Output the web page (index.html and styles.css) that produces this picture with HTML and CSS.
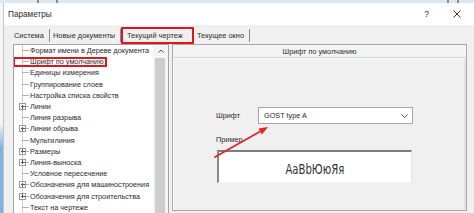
FILE: index.html
```html
<!DOCTYPE html>
<html lang="ru">
<head>
<meta charset="utf-8">
<title>Параметры</title>
<link rel="stylesheet" href="styles.css">
</head>
<body>
<div class="screen">
  <div class="backstrip">
    <span class="mark m1"></span><span class="mark m2"></span><span class="mark m3"></span><span class="mark m4"></span>
  </div>
  <div class="main">
    <div class="edge"></div>
    <div class="dialog">
      <div class="titlebar">
        <span class="title">Параметры</span>
        <span class="help">?</span>
        <svg class="close" width="8" height="8" viewBox="0 0 8 8"><path d="M0.5 0.5L7.5 7.5M7.5 0.5L0.5 7.5" stroke="#333" stroke-width="1" fill="none"/></svg>
      </div>
      <div class="tabs">
        <div class="tab t1">Система</div>
        <div class="tab t2">Новые документы</div>
        <div class="tab t3">Текущий чертеж</div>
        <div class="tab t4">Текущее окно</div>
      </div>
      <div class="content">
        <div class="tree">
          <ul class="list">
            <li class="row"><span class="conn"><i class="dash"></i></span><span class="label">Формат имени в Дереве документа</span></li>
            <li class="row sel"><span class="conn"><i class="dash"></i></span><span class="label">Шрифт по умолчанию</span></li>
            <li class="row"><span class="conn"><i class="dash"></i></span><span class="label">Единицы измерения</span></li>
            <li class="row"><span class="conn"><i class="dash"></i></span><span class="label">Группирование слоев</span></li>
            <li class="row"><span class="conn"><i class="dash"></i></span><span class="label">Настройка списка свойств</span></li>
            <li class="row"><span class="conn"><i class="exp"></i><i class="dash short"></i></span><span class="label">Линии</span></li>
            <li class="row"><span class="conn"><i class="dash"></i></span><span class="label">Линия разрыва</span></li>
            <li class="row"><span class="conn"><i class="exp"></i><i class="dash short"></i></span><span class="label">Линии обрыва</span></li>
            <li class="row"><span class="conn"><i class="dash"></i></span><span class="label">Мультилиния</span></li>
            <li class="row"><span class="conn"><i class="exp"></i><i class="dash short"></i></span><span class="label">Размеры</span></li>
            <li class="row"><span class="conn"><i class="exp"></i><i class="dash short"></i></span><span class="label">Линия-выноска</span></li>
            <li class="row"><span class="conn"><i class="dash"></i></span><span class="label">Условное пересечение</span></li>
            <li class="row"><span class="conn"><i class="exp"></i><i class="dash short"></i></span><span class="label">Обозначения для машиностроения</span></li>
            <li class="row"><span class="conn"><i class="exp"></i><i class="dash short"></i></span><span class="label">Обозначения для строительства</span></li>
            <li class="row"><span class="conn"><i class="dash"></i></span><span class="label">Текст на чертеже</span></li>
          </ul>
          <div class="vscroll">
            <div class="sbtn"><svg width="6" height="4" viewBox="0 0 6 4"><path d="M0.5 3.5L3 1L5.5 3.5" stroke="#555" stroke-width="1" fill="none"/></svg></div>
            <div class="thumb"></div>
          </div>
        </div>
        <div class="panel">
          <div class="phead">Шрифт по умолчанию</div>
          <div class="pbody">
            <div class="field">
              <span class="flabel">Шрифт</span>
              <div class="combo"><span>GOST type A</span><svg width="7" height="4" viewBox="0 0 7 4"><path d="M0.5 0.5L3.5 3.5L6.5 0.5" stroke="#555" stroke-width="1" fill="none"/></svg></div>
            </div>
            <div class="flabel sample-label">Пример</div>
            <div class="sample"><span>АаBbЮюЯя</span></div>
          </div>
        </div>
      </div>
    </div>
  </div>
  <svg class="pointer" width="474" height="213" viewBox="0 0 474 213">
    <path d="M215 157L261 131" stroke="#e3242b" stroke-width="1.8" stroke-linecap="round" fill="none"/>
    <path d="M268 127L261.9 134.5L258.5 128.4Z" fill="#e3242b"/>
  </svg>
</div>
</body>
</html>
```
FILE: styles.css
```css
html, body {
  margin: 0;
  padding: 0;
  background: #f0f0f0;
}

.screen {
  width: 474px;
  height: 213px;
  overflow: hidden;
  position: relative;
  display: flex;
  flex-direction: column;
  background: #f0f0f0;
  font-family: "Liberation Sans", Arial, sans-serif;
  color: #2b2b2b;
}

.backstrip {
  height: 3px;
  flex-shrink: 0;
  display: flex;
  background: #dbe7f3;
}

.mark {
  width: 2px;
  height: 3px;
  background: #8d8d8d;
}
.m1 { margin-left: 37px; }
.m2 { margin-left: 17px; }
.m3 { margin-left: 389px; }
.m4 { margin-left: 8px; }

.main {
  flex: 1;
  display: flex;
  min-height: 0;
}

.edge {
  width: 3px;
  flex-shrink: 0;
  background: linear-gradient(#f4f6f8 0, #f4f6f8 120px, #7fb2e5 145px, #7fb2e5 100%);
}

.dialog {
  flex: 1;
  display: flex;
  flex-direction: column;
  border-left: 1px solid #c4c4c4;
  background: #f0f0f0;
  min-width: 0;
}

.titlebar {
  height: 22px;
  flex-shrink: 0;
  background: #fff;
  display: flex;
  align-items: center;
  padding-left: 4px;
  font-size: 8.2px;
}

.help {
  margin-left: auto;
  margin-right: 24px;
  font-size: 8.5px;
}

.close {
  margin-right: 13px;
}

.tabs {
  height: 19px;
  flex-shrink: 0;
  display: flex;
  align-items: flex-start;
  padding-left: 9px;
  font-size: 7.4px;
  white-space: nowrap;
}

.tab {
  box-sizing: border-box;
  height: 13px;
  margin-top: 4px;
  display: flex;
  align-items: center;
  border-right: 1px solid #8a8a8a;
  padding-left: 1px;
}

.t1 { width: 37px; }
.t2 { width: 71px; padding-left: 3px; }
.t3 {
  width: 73px;
  height: 17px;
  margin-top: 2px;
  border: 2px solid #e0161e;
  padding-left: 4px;
}
.t4 { width: 56px; padding-left: 3px; }

.content {
  flex: 1;
  display: flex;
  align-items: flex-start;
  padding-left: 9px;
  gap: 3px;
  min-height: 0;
}

.tree {
  box-sizing: border-box;
  width: 156px;
  height: 200px;
  flex-shrink: 0;
  border: 1px solid #a3a3a3;
  border-bottom: none;
  background: #fff;
  display: flex;
}

.list {
  flex: 1;
  margin: 0;
  padding: 0;
  list-style: none;
  background: linear-gradient(to right, transparent 8px, #cfcfcf 8px, #cfcfcf 9px, transparent 9px) no-repeat;
  min-width: 0;
  overflow: hidden;
}

.row {
  height: 11.2px;
  display: flex;
  align-items: center;
  padding-left: 5px;
  font-size: 7.25px;
  white-space: nowrap;
}

.row.sel {
  position: relative;
  width: max-content;
  padding-right: 3px;
}

.row.sel::after {
  content: "";
  position: absolute;
  left: -1px;
  right: 0;
  top: 1px;
  bottom: 0;
  border: 2px solid #e0161e;
}

.conn {
  width: 10px;
  height: 100%;
  flex-shrink: 0;
  display: flex;
  align-items: center;
}

.dash {
  flex: 1;
  height: 1px;
  margin-left: 3px;
  background: #b0b0b0;
}

.dash.short {
  margin-left: 0;
}

.exp {
  box-sizing: border-box;
  width: 7px;
  height: 7px;
  flex-shrink: 0;
  border: 1px solid #9a9a9a;
  background:
    linear-gradient(#555, #555) 0.5px 2px / 4px 1px no-repeat,
    linear-gradient(#555, #555) 2px 0.5px / 1px 4px no-repeat,
    #fff;
}

.label {
  margin-left: 1px;
}

.vscroll {
  width: 15px;
  flex-shrink: 0;
  display: flex;
  flex-direction: column;
  background: #f4f4f4;
}

.sbtn {
  height: 12px;
  display: flex;
  align-items: center;
  justify-content: flex-start;
  padding-left: 5px;
}

.thumb {
  flex: 1;
  width: 10px;
  margin-left: 2px;
  margin-top: 1px;
  background: #cdcdcd;
}

.panel {
  box-sizing: border-box;
  width: 295px;
  height: 167px;
  flex-shrink: 0;
  border: 1px solid #a9a9a9;
  box-shadow: inset 1px 0 #fff, inset -2px 0 #e2e2e2;
  display: flex;
  flex-direction: column;
  background: #f0f0f0;
}

.phead {
  height: 12px;
  flex-shrink: 0;
  display: flex;
  align-items: center;
  justify-content: center;
  font-size: 7.3px;
  background: #f4f4f4;
  border-bottom: 1px solid #d4d4d4;
  box-shadow: 0 1px #fafafa;
}

.pbody {
  padding: 49px 0 0 43px;
  font-size: 7.3px;
}

.field {
  display: flex;
  align-items: center;
  height: 17px;
}

.flabel {
  width: 42px;
  flex-shrink: 0;
}

.combo {
  box-sizing: border-box;
  width: 155px;
  height: 17px;
  border: 1px solid #a6a6a6;
  background: #fff;
  display: flex;
  align-items: center;
  justify-content: space-between;
  padding: 0 4px 0 5px;
}

.sample-label {
  margin-top: 11px;
  height: 10px;
  line-height: 10px;
}

.sample {
  box-sizing: border-box;
  width: 195px;
  height: 33px;
  margin-top: 5px;
  margin-left: 1px;
  border-top: 2px solid #7d7d7d;
  border-left: 2px solid #8a8a8a;
  border-right: 1px solid #e6e6e6;
  border-bottom: 1px solid #f6f6f6;
  background: #fff;
  display: flex;
  align-items: center;
  justify-content: center;
}

.sample span {
  display: inline-block;
  font-family: "DejaVu Sans", sans-serif;
  font-size: 14px;
  color: #333;
  transform: scaleX(0.72);
  margin-top: 3px;
}

.pointer {
  position: absolute;
  left: 0;
  top: 0;
  pointer-events: none;
}
```
